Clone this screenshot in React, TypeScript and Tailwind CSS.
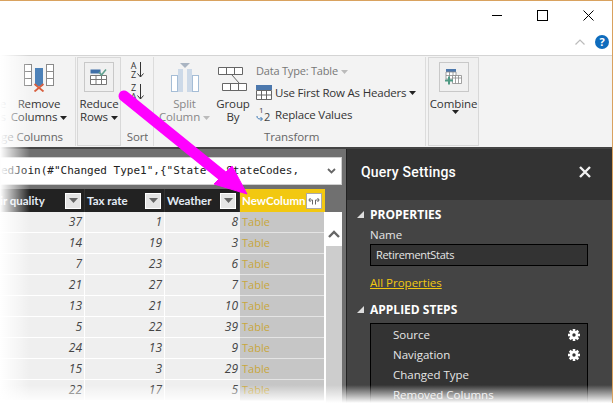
import React from 'react';

const rows = [
  [37, 1, 8], [14, 19, 3], [7, 23, 6], [21, 27, 7], [13, 21, 10],
  [5, 22, 39], [24, 13, 9], [15, 3, 29], [22, 17, 5],
];

const Caret = ({ color = '#222' }: { color?: string }) => (
  <svg width="7" height="4" viewBox="0 0 7 4" className="inline-block align-middle ml-[3px]"><path d="M0 0h7L3.500 4z" fill={color} /></svg>
);

const RemoveIcon = () => (
  <svg width="30" height="28" viewBox="0 0 30 28">
    <g fill="#fff" stroke="#8a8a8a">
      <rect x="0.5" y="0.5" width="7" height="7" /><rect x="0.5" y="7.500" width="7" height="7" /><rect x="0.5" y="14.500" width="7" height="7" />
      <rect x="22.5" y="0.5" width="7" height="7" /><rect x="22.5" y="7.500" width="7" height="7" /><rect x="22.5" y="14.500" width="7" height="7" />
    </g>
    <rect x="11" y="4" width="8" height="18" fill="#4c81b8" />
    <path d="M10.500 20l9 7.500M19.500 20l-9 7.500" stroke="#d9603f" strokeWidth="1.800" />
  </svg>
);

const ReduceIcon = () => (
  <svg width="18" height="16" viewBox="0 0 18 16">
    <rect x="0.5" y="0.5" width="10" height="4" fill="#3f6fa8" />
    <path d="M.5 6.500h16v9H.5zM.5 10.500h16M6 6.500v9M11.500 6.500v9" fill="#fff" stroke="#777" />
    <path d="M9 3l2.500 3L16 .5" fill="none" stroke="#5fa08e" strokeWidth="1.600" />
  </svg>
);

const SortIcon = ({ top, bottom }: { top: string; bottom: string }) => (
  <div className="flex items-center h-[22px] gap-[1px]">
    <div className="flex flex-col items-center text-[9px] leading-[9px] text-[#333] font-['Open_Sans',sans-serif]">
      <span>{top}</span><span>{bottom}</span>
    </div>
    <svg width="7" height="16" viewBox="0 0 7 16"><path d="M3.500 0v15M.5 11.500l3 3.500 3-3.500" fill="none" stroke="#333" /></svg>
  </div>
);

const SplitIcon = () => (
  <svg width="28" height="30" viewBox="0 0 28 30">
    <path d="M9 0h10l-5 5z" fill="#a9b4c2" />
    <rect x="0.500" y="12.500" width="6" height="16" fill="#fff" stroke="#a5bdd6" />
    <rect x="21.500" y="12.500" width="6" height="16" fill="#fff" stroke="#a5bdd6" />
    <rect x="7" y="6" width="5" height="23" fill="#ccd9e8" />
    <rect x="16" y="6" width="5" height="23" fill="#ccd9e8" />
  </svg>
);

const GroupIcon = () => (
  <svg width="30" height="24" viewBox="0 0 30 24" fill="#fff" stroke="#666">
    <path d="M.5.500h24v7H.5zM8.500 .5v7M16.500 .5v7" />
    <path d="M4.500 16.500h24v7h-24zM12.500 16.500v7M20.500 16.500v7" />
    <path d="M14 8l7 8" />
  </svg>
);

const HeadersIcon = () => (
  <svg width="16" height="15" viewBox="0 0 16 15">
    <rect width="16" height="5" fill="#4c78ad" />
    <path d="M.5 5.500h15v9H.5zM.5 10h15M5.500 5.500v9M10.500 5.500v9" fill="#fff" stroke="#666" />
  </svg>
);

const ReplaceIcon = () => (
  <svg width="16" height="16" viewBox="0 0 16 16">
    <text x="3" y="7" fontSize="8" fill="#444" fontFamily="Open Sans">1</text>
    <text x="8" y="15" fontSize="11" fill="#444" fontFamily="Open Sans">2</text>
    <path d="M1 10c0 3 2 3 5 3M4.500 11l2 2-2 2" fill="none" stroke="#3b78b5" />
  </svg>
);

const CombineIcon = () => (
  <svg width="17" height="17" viewBox="0 0 17 17">
    <rect x="1" y="0" width="10" height="3" fill="#4c78ad" />
    <path d="M1 3h10v7H1zM1 6.500h10M4.500 3v7M8 3v7" fill="#fff" stroke="#8a8a8a" strokeWidth=".8" />
    <path d="M7.500 6.500h9v8h-9zM7.500 9h9M10.500 6.500v8M13.500 6.500v8" fill="#fff" stroke="#8a8a8a" strokeWidth=".8" />
    <path d="M4 7.500v8M0 11.500h8" stroke="#4f9a84" strokeWidth="2" />
  </svg>
);

const Gear = () => (
  <svg width="12" height="12" viewBox="0 0 12 12">
    <g fill="#fff">
      <circle cx="6" cy="6" r="4.200" />
      <rect x="4.700" y="0" width="2.600" height="12" />
      <rect x="0" y="4.700" width="12" height="2.600" />
      <rect x="4.700" y="0" width="2.600" height="12" transform="rotate(45 6 6)" />
      <rect x="4.700" y="0" width="2.600" height="12" transform="rotate(-45 6 6)" />
    </g>
    <circle cx="6" cy="6" r="1.700" fill="#333" />
  </svg>
);

const Triangle = () => (
  <svg width="7" height="7" viewBox="0 0 7 7" className="shrink-0"><path d="M7 0v7H0z" fill="#ddd" /></svg>
);

const FilterButton = () => (
  <div className="w-[16px] h-[16px] bg-[#e4e4e4] border border-white flex items-center justify-center shrink-0">
    <svg width="9" height="5" viewBox="0 0 9 5"><path d="M0 0h9L4.500 5z" fill="#666" /></svg>
  </div>
);

const Header = ({ w, label, clip }: { w: string; label: string; clip?: boolean }) => (
  <div className={`${w} h-full flex items-center justify-between pr-[3px] border-r border-[#333]`}>
    <span className={`font-['Lato',sans-serif] font-bold text-[11.5px] text-[#e4ecf5] whitespace-nowrap ${clip ? '-ml-[8px]' : 'pl-[2px]'}`}>{label}</span>
    <FilterButton />
  </div>
);

export default function App() {
  const ui = "font-['Open_Sans',sans-serif]";
  const groupLabel = 'h-[20px] pt-[5px] text-[#666] overflow-hidden';
  return (
    <div className={`relative w-[613px] h-[403px] overflow-hidden bg-white ${ui} flex flex-col border-t border-r border-[#d9a25f]`}>
      {/* title bar */}
      <div className="h-[54px] shrink-0 relative">
        <div className="flex justify-end items-start h-[30px] pt-[9px] pr-[18px] gap-[34px]">
          <div className="w-[10px] h-[10px] mt-[5px] border-t border-black" />
          <div className="w-[11px] h-[11px] border border-black mx-[1px]" />
          <svg width="11" height="11" viewBox="0 0 11 11"><path d="M.5.5l10 10M10.500 .5l-10 10" stroke="#000" /></svg>
        </div>
        <div className="flex justify-end items-center gap-[10px] pr-[3px] pt-[4px]">
          <svg width="10" height="6" viewBox="0 0 10 6"><path d="M.5 5.500L5 1l4.500 4.500" fill="none" stroke="#bbb" strokeWidth="1.200" /></svg>
          <div className="w-[14px] h-[14px] rounded-full bg-[#0f6cbd] text-white text-[11px] font-bold leading-[14px] text-center">?</div>
        </div>
      </div>

      {/* ribbon */}
      <div className="h-[92px] shrink-0 bg-[#f3f3f3] border-t border-[#d4d4d4] flex text-[11.5px] leading-[13px] text-[#333] whitespace-nowrap overflow-hidden tracking-[-0.1px]">
        <div className="w-[76px] shrink-0 border-r border-[#dcdcdc] my-[1px] flex flex-col">
          <div className="h-[68px] flex">
            <div className="w-[6px] flex flex-col items-end shrink-0 pt-[40px] text-[#999] overflow-hidden">
              <span>e</span><span>s</span>
            </div>
            <div className="w-[66px] flex flex-col items-center pt-[7px]">
              <RemoveIcon />
              <span className="mt-[5px]">Remove</span>
              <span>Columns<Caret /></span>
            </div>
          </div>
          <div className={`${groupLabel} pl-[1px]`}>ge Columns</div>
        </div>

        <div className="w-[44px] shrink-0 mx-[1px] my-[1px] bg-[#f0f0f0] border border-[#d8d8d8] flex flex-col items-center">
          <div className="mt-[4px] w-[30px] h-[30px] border border-[#c8c8c8] flex items-center justify-center"><ReduceIcon /></div>
          <span className="mt-[5px]">Reduce</span>
          <span>Rows<Caret /></span>
        </div>

        <div className="w-[32px] shrink-0 my-[1px] border-r border-[#dcdcdc] flex flex-col items-center">
          <div className="h-[68px] pt-[2px] flex flex-col">
            <SortIcon top="A" bottom="Z" />
            <SortIcon top="Z" bottom="A" />
          </div>
          <div className={groupLabel}>Sort</div>
        </div>

        <div className="w-[272px] shrink-0 my-[1px] border-r border-[#dcdcdc] flex flex-col">
          <div className="h-[68px] flex">
            <div className="w-[58px] pl-[3px] flex flex-col items-center text-[#888] pt-[6px]">
              <SplitIcon />
              <span className="mt-[4px]">Split</span>
              <span>Column<Caret color="#bbb" /></span>
            </div>
            <div className="w-[42px] flex flex-col items-center pt-[10px]">
              <GroupIcon />
              <span className="mt-[6px]">Group</span>
              <span>By</span>
            </div>
            <div className="flex flex-col pl-[2px] pt-[4px] tracking-[-0.2px]">
              <div className="h-[19px] leading-[19px] text-[11px] text-[#777]">Data Type: Table<Caret color="#bbb" /></div>
              <div className="h-[24px] flex items-center gap-[3px]"><HeadersIcon /><span>Use First Row As Headers<Caret /></span></div>
              <div className="h-[20px] flex items-center gap-[3px]"><ReplaceIcon /><span>Replace Values</span></div>
            </div>
          </div>
          <div className={`${groupLabel} pl-[110px]`}>Transform</div>
        </div>

        <div className="w-[51px] shrink-0 ml-[2px] my-[1px] bg-[#f0f0f0] border border-[#d8d8d8] flex flex-col items-center">
          <div className="mt-[4px] w-[30px] h-[30px] border border-[#c8c8c8] flex items-center justify-center"><CombineIcon /></div>
          <span className="mt-[5px]">Combine</span>
          <Caret />
        </div>
      </div>

      {/* body */}
      <div className="flex-1 flex min-h-0 border-t-2 border-[#444]">
        <div className="w-[347px] shrink-0 bg-[#707070] border-r border-[#222] flex flex-col pt-[8px] pr-[4px]">
          <div className="h-[28px] shrink-0 bg-white border border-[#d0d0d0] flex items-center justify-between pr-[5px]">
            <span className="font-['DejaVu_Sans_Mono',monospace] text-[11px] text-[#222] whitespace-pre">edJoin(#"Changed Type1",{'{'}"State", StateCodes,</span>
            <svg width="9" height="6" viewBox="0 0 9 6"><path d="M1 1l3.500 3.500L8 1" fill="none" stroke="#666" strokeWidth="1.800" /></svg>
          </div>
          <div className="h-[4px] shrink-0" />
          <div className="h-[23px] shrink-0 flex">
            <div className="h-full flex bg-[#222] overflow-hidden">
              <Header w="w-[85px]" label="Air quality" clip />
              <Header w="w-[80px]" label="Tax rate" />
              <Header w="w-[75px]" label="Weather" />
            </div>
            <div className="w-[85px] h-full bg-[#f2c811] flex items-center justify-between pl-[2px] pr-[3px]">
              <span className="font-['Lato',sans-serif] font-bold text-[11.5px] text-white whitespace-nowrap">NewColumn</span>
              <div className="w-[16px] h-[16px] shrink-0 bg-white border border-[#aaa] flex items-center justify-center">
                <svg width="12" height="8" viewBox="0 0 12 8"><path d="M4.500 7.500V3H1M2.500 1L.8 3l1.700 2M7.500 7.500V3H11M9.500 1l1.700 2-1.700 2" fill="none" stroke="#666" /></svg>
              </div>
            </div>
          </div>
          <div className="flex-1 flex min-h-0 bg-white overflow-hidden">
            <div className="w-[325px] shrink-0">
              {rows.map((r, i) => (
                <div key={i} className="flex h-[21px] text-[12px] italic text-[#444]">
                  <div className="w-[85px] bg-[#efefef] border-r border-b border-white text-right pr-[2px] leading-[19px]">{r[0]}</div>
                  <div className="w-[80px] bg-[#efefef] border-r border-b border-white text-right pr-[2px] leading-[19px]">{r[1]}</div>
                  <div className="w-[75px] bg-[#efefef] border-b border-white text-right pr-[2px] leading-[19px]">{r[2]}</div>
                  <div className="w-[84px] bg-[#c6c6c6] border-b border-[#e4e4e4] not-italic text-[11px] text-[#c8a73d] pl-[2px] leading-[19px]">Table</div>
                </div>
              ))}
            </div>
            <div className="flex-1 flex flex-col">
              <div className="h-[34px] shrink-0 flex items-center justify-center pt-[9px]">
                <svg width="12" height="8" viewBox="0 0 12 8"><path d="M1 7l5-5 5 5" fill="none" stroke="#666" strokeWidth="2.400" /></svg>
              </div>
              <div className="flex-1 bg-[#cdcdcd] ml-[1px]" />
            </div>
          </div>
        </div>

        {/* query settings */}
        <div className="flex-1 bg-[#444] flex flex-col text-[#e6e6e6]">
          <div className="h-[51px] shrink-0 bg-[#333] flex items-center justify-between pl-[14px] pr-[21px] pb-[5px]">
            <span className="text-[14px] text-white font-['Roboto',sans-serif] font-medium tracking-[0.2px]">Query Settings</span>
            <svg width="12" height="12" viewBox="0 0 12 12"><path d="M1 1l10 10M11 1L1 11" stroke="#f2f2f2" strokeWidth="2.400" /></svg>
          </div>
          <div className="flex-1 pl-[14px] pr-[24px] pt-[6px] text-[11.5px]">
            <div className="flex items-center gap-[6px] -ml-[4px] h-[17px]">
              <Triangle /><span className="text-[12px] font-bold text-white uppercase">Properties</span>
            </div>
            <div className="pl-[9px]">
              <div className="mt-[3px] h-[17px] leading-[17px]">Name</div>
              <div className="mt-[1px] h-[22px] bg-[#333] border border-black pl-[5px] leading-[20px] text-[11px] tracking-[-0.3px]">RetirementStats</div>
              <div className="mt-[8px] h-[17px] leading-[17px] text-[#f2c811] underline">All Properties</div>
            </div>
            <div className="mt-[10px] flex items-center gap-[6px] -ml-[4px] h-[17px]">
              <Triangle /><span className="text-[12px] font-bold text-white uppercase">Applied Steps</span>
            </div>
            <div className="ml-[9px] mt-[5px] bg-[#333] border border-black pt-[1px] h-[100px]">
              {['Source', 'Navigation', 'Changed Type', 'Removed Columns'].map((s, i) => (
                <div key={s} className="h-[20px] flex items-center justify-between pl-[22px] pr-[7px]">
                  <span>{s}</span>
                  {i < 2 && <Gear />}
                </div>
              ))}
            </div>
          </div>
        </div>
      </div>

      {/* magenta callout arrow */}
      <svg className="absolute left-0 top-0 pointer-events-none" width="613" height="403" viewBox="0 0 613 403">
        <path d="M124 95L224 176" stroke="#ff00ff" strokeWidth="11" strokeLinecap="round" />
        <path d="M247 193L232 165 214 183z" fill="#ff00ff" stroke="#ff00ff" strokeLinejoin="round" />
      </svg>

      {/* torn-edge fades */}
      <div className="absolute left-0 top-[54px] bottom-0 w-[30px] bg-linear-to-r from-white to-transparent pointer-events-none" />
      <div className="absolute left-0 right-[-1px] bottom-0 h-[18px] bg-linear-to-b from-transparent to-white pointer-events-none" />
    </div>
  );
}
